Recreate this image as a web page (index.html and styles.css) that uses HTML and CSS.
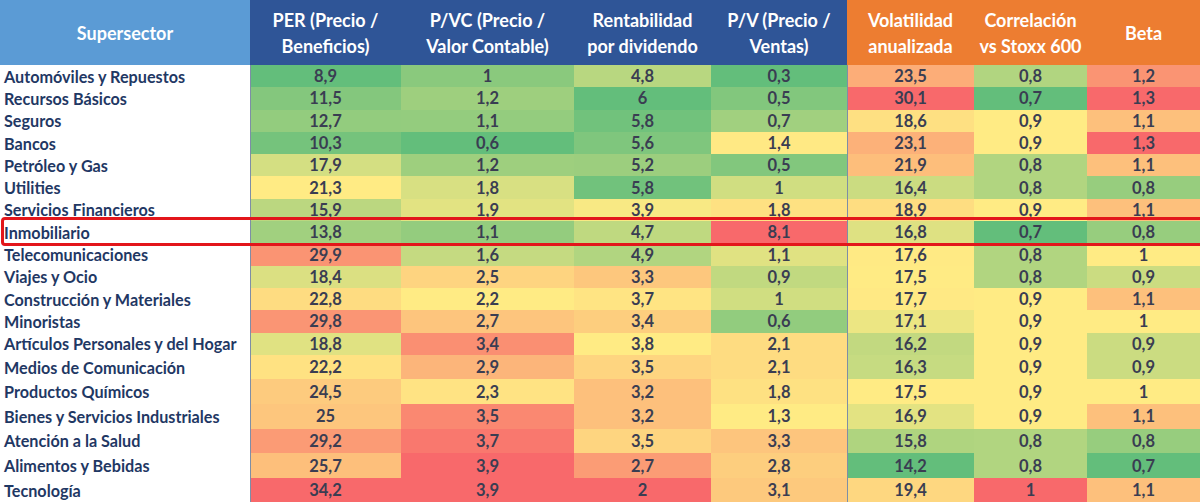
FILE: index.html
```html
<!DOCTYPE html>
<html lang="es">
<head>
<meta charset="utf-8">
<title>Supersectores Stoxx 600</title>
<link rel="stylesheet" href="styles.css">
</head>
<body>
<div class="sheet">
  <div class="row head">
    <div class="h h-name">Supersector</div>
    <div class="h h-blue">PER (Precio /<br>Beneficios)</div>
    <div class="h h-blue">P/VC (Precio /<br>Valor Contable)</div>
    <div class="h h-blue">Rentabilidad<br>por dividendo</div>
    <div class="h h-blue">P/V (Precio /<br>Ventas)</div>
    <div class="h h-orange">Volatilidad<br>anualizada</div>
    <div class="h h-orange">Correlación<br>vs Stoxx 600</div>
    <div class="h h-orange">Beta</div>
  </div>
  <div class="row"><div class="name">Automóviles y Repuestos</div><div class="c">8,9</div><div class="c">1</div><div class="c">4,8</div><div class="c">0,3</div><div class="c">23,5</div><div class="c">0,8</div><div class="c">1,2</div></div>
  <div class="row"><div class="name">Recursos Básicos</div><div class="c">11,5</div><div class="c">1,2</div><div class="c">6</div><div class="c">0,5</div><div class="c">30,1</div><div class="c">0,7</div><div class="c">1,3</div></div>
  <div class="row"><div class="name">Seguros</div><div class="c">12,7</div><div class="c">1,1</div><div class="c">5,8</div><div class="c">0,7</div><div class="c">18,6</div><div class="c">0,9</div><div class="c">1,1</div></div>
  <div class="row"><div class="name">Bancos</div><div class="c">10,3</div><div class="c">0,6</div><div class="c">5,6</div><div class="c">1,4</div><div class="c">23,1</div><div class="c">0,9</div><div class="c">1,3</div></div>
  <div class="row"><div class="name">Petróleo y Gas</div><div class="c">17,9</div><div class="c">1,2</div><div class="c">5,2</div><div class="c">0,5</div><div class="c">21,9</div><div class="c">0,8</div><div class="c">1,1</div></div>
  <div class="row"><div class="name">Utilities</div><div class="c">21,3</div><div class="c">1,8</div><div class="c">5,8</div><div class="c">1</div><div class="c">16,4</div><div class="c">0,8</div><div class="c">0,8</div></div>
  <div class="row"><div class="name">Servicios Financieros</div><div class="c">15,9</div><div class="c">1,9</div><div class="c">3,9</div><div class="c">1,8</div><div class="c">18,9</div><div class="c">0,9</div><div class="c">1,1</div></div>
  <div class="row"><div class="name">Inmobiliario</div><div class="c">13,8</div><div class="c">1,1</div><div class="c">4,7</div><div class="c">8,1</div><div class="c">16,8</div><div class="c">0,7</div><div class="c">0,8</div></div>
  <div class="row"><div class="name">Telecomunicaciones</div><div class="c">29,9</div><div class="c">1,6</div><div class="c">4,9</div><div class="c">1,1</div><div class="c">17,6</div><div class="c">0,8</div><div class="c">1</div></div>
  <div class="row"><div class="name">Viajes y Ocio</div><div class="c">18,4</div><div class="c">2,5</div><div class="c">3,3</div><div class="c">0,9</div><div class="c">17,5</div><div class="c">0,8</div><div class="c">0,9</div></div>
  <div class="row"><div class="name">Construcción y Materiales</div><div class="c">22,8</div><div class="c">2,2</div><div class="c">3,7</div><div class="c">1</div><div class="c">17,7</div><div class="c">0,9</div><div class="c">1,1</div></div>
  <div class="row"><div class="name">Minoristas</div><div class="c">29,8</div><div class="c">2,7</div><div class="c">3,4</div><div class="c">0,6</div><div class="c">17,1</div><div class="c">0,9</div><div class="c">1</div></div>
  <div class="row"><div class="name">Artículos Personales y del Hogar</div><div class="c">18,8</div><div class="c">3,4</div><div class="c">3,8</div><div class="c">2,1</div><div class="c">16,2</div><div class="c">0,9</div><div class="c">0,9</div></div>
  <div class="row tall"><div class="name">Medios de Comunicación</div><div class="c">22,2</div><div class="c">2,9</div><div class="c">3,5</div><div class="c">2,1</div><div class="c">16,3</div><div class="c">0,9</div><div class="c">0,9</div></div>
  <div class="row tall"><div class="name">Productos Químicos</div><div class="c">24,5</div><div class="c">2,3</div><div class="c">3,2</div><div class="c">1,8</div><div class="c">17,5</div><div class="c">0,9</div><div class="c">1</div></div>
  <div class="row tall"><div class="name">Bienes y Servicios Industriales</div><div class="c">25</div><div class="c">3,5</div><div class="c">3,2</div><div class="c">1,3</div><div class="c">16,9</div><div class="c">0,9</div><div class="c">1,1</div></div>
  <div class="row tall"><div class="name">Atención a la Salud</div><div class="c">29,2</div><div class="c">3,7</div><div class="c">3,5</div><div class="c">3,3</div><div class="c">15,8</div><div class="c">0,8</div><div class="c">0,8</div></div>
  <div class="row tall"><div class="name">Alimentos y Bebidas</div><div class="c">25,7</div><div class="c">3,9</div><div class="c">2,7</div><div class="c">2,8</div><div class="c">14,2</div><div class="c">0,8</div><div class="c">0,7</div></div>
  <div class="row tall"><div class="name">Tecnología</div><div class="c">34,2</div><div class="c">3,9</div><div class="c">2</div><div class="c">3,1</div><div class="c">19,4</div><div class="c">1</div><div class="c">1,1</div></div>
  <div class="highlight"></div>
</div>
<script src="script.js"></script>
</body>
</html>
```

FILE: styles.css
```css
html, body {
  margin: 0;
  padding: 0;
  background: #ffffff;
}

.sheet {
  position: relative;
  width: 1200px;
  height: 502px;
  overflow: hidden;
  font-family: Lato, "Open Sans", "Liberation Sans", sans-serif;
  font-weight: 700;
}

.row {
  display: grid;
  grid-template-columns: 250px 151px 173px 137px 136px 127px 113px 113px;
  height: 22.3px;
}

.row.tall {
  height: 24.6px;
}

.row.head {
  height: 65px;
}

.h {
  display: flex;
  align-items: center;
  justify-content: center;
  text-align: center;
  color: #ffffff;
  font-size: 18px;
  line-height: 26px;
}

.h-name {
  background: #5b9bd5;
}

.h-blue {
  background: #2f5597;
}

.h-orange {
  background: #ed7d31;
}

.name {
  display: flex;
  align-items: center;
  padding-left: 4px;
  color: #1f3864;
  font-size: 16.2px;
  white-space: nowrap;
}

.c {
  display: flex;
  align-items: center;
  justify-content: center;
  color: #3a3d52;
  font-size: 16.5px;
}

.row .c:nth-child(2),
.row .c:nth-child(6) {
  box-shadow: inset 1px 0 0 #7e8ea6;
}

.highlight {
  position: absolute;
  left: 1px;
  top: 217px;
  width: 1215px;
  height: 29px;
  box-sizing: border-box;
  border: 3px solid #e3161b;
  border-radius: 4px;
  pointer-events: none;
}
```

FILE: script.js
```js
(function () {
  var GREEN = [99, 190, 123];
  var YELLOW = [255, 235, 132];
  var RED = [248, 105, 107];
  var highGood = { 3: true };

  function mix(a, b, t) {
    return 'rgb(' + [0, 1, 2].map(function (i) {
      return Math.round(a[i] + (b[i] - a[i]) * t);
    }).join(',') + ')';
  }

  var rows = Array.prototype.slice.call(document.querySelectorAll('.row:not(.head)'));
  for (var col = 1; col <= 7; col++) {
    var cells = rows.map(function (r) { return r.children[col]; });
    var vals = cells.map(function (c) { return parseFloat(c.textContent.replace(',', '.')); });
    var sorted = vals.slice().sort(function (a, b) { return a - b; });
    var min = sorted[0], max = sorted[sorted.length - 1];
    var k = (sorted.length - 1) * 0.5;
    var lo = Math.floor(k), hi = Math.ceil(k);
    var mid = sorted[lo] + (sorted[hi] - sorted[lo]) * (k - lo);
    var cMin = highGood[col] ? RED : GREEN;
    var cMax = highGood[col] ? GREEN : RED;
    cells.forEach(function (cell, i) {
      var v = vals[i], color;
      if (v <= mid) {
        color = mix(cMin, YELLOW, mid === min ? 1 : (v - min) / (mid - min));
      } else {
        color = mix(YELLOW, cMax, max === mid ? 0 : (v - mid) / (max - mid));
      }
      cell.style.backgroundColor = color;
    });
  }
})();
```
